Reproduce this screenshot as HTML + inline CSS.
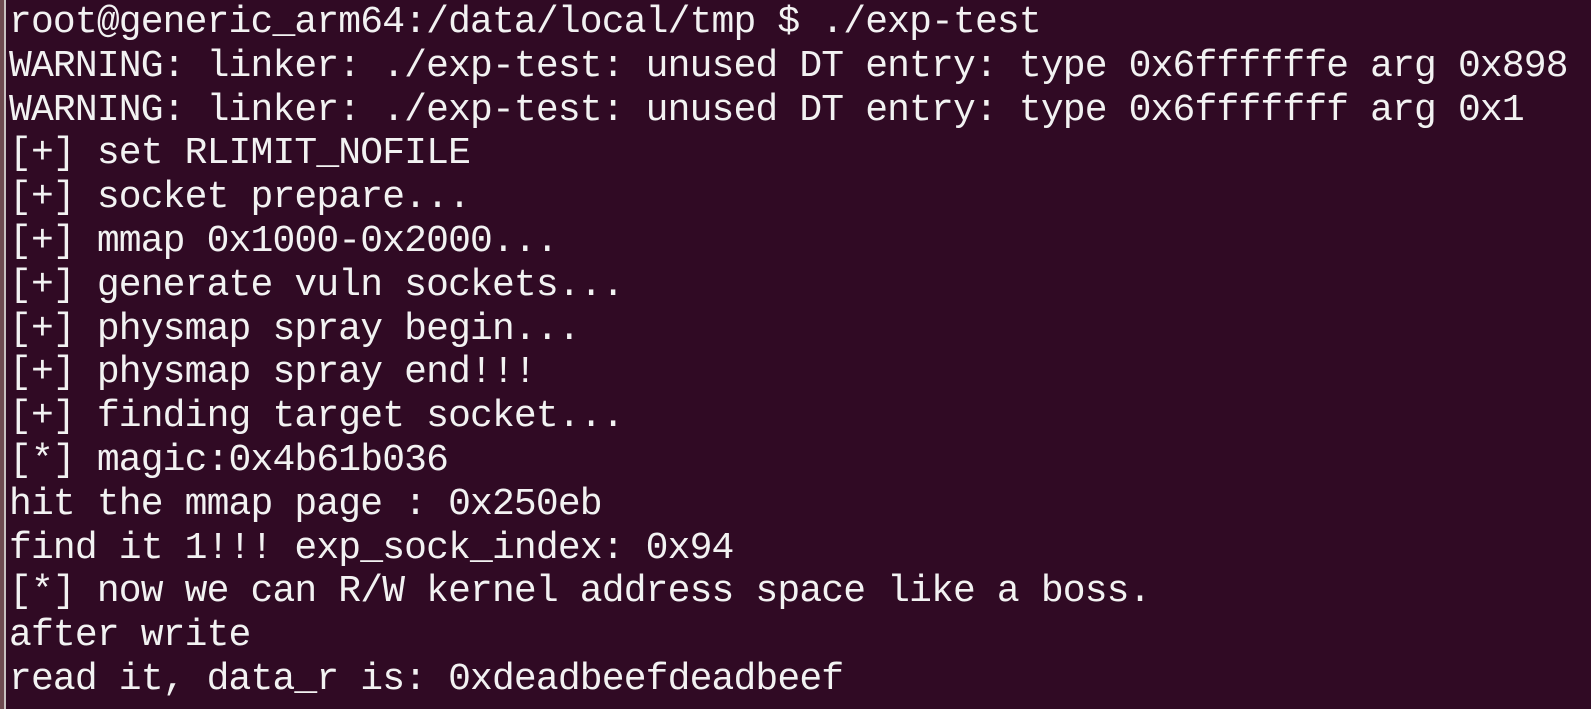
<!DOCTYPE html>
<html><head><meta charset="utf-8"><style>
html,body{margin:0;padding:0;width:1591px;height:709px;overflow:hidden;background:#300a24;}
.b{position:absolute;left:0;top:0;width:4px;height:709px;background:#6e4a50;}
.b2{position:absolute;left:4px;top:0;width:2px;height:709px;background:#c8c0c0;}
.l{position:absolute;left:9px;margin:0;white-space:pre;font-family:"Liberation Mono","DejaVu Sans Mono",monospace;font-size:38px;letter-spacing:-0.85px;line-height:43px;color:#f2f2f2;}
</style></head><body><div class="b"></div><div class="b2"></div>
<div class="l" style="top:1px">root@generic_arm64:/data/local/tmp $ ./exp-test</div>
<div class="l" style="top:44.8px">WARNING: linker: ./exp-test: unused DT entry: type 0x6ffffffe arg 0x898</div>
<div class="l" style="top:88.6px">WARNING: linker: ./exp-test: unused DT entry: type 0x6fffffff arg 0x1</div>
<div class="l" style="top:132.4px">[+] set RLIMIT_NOFILE</div>
<div class="l" style="top:176.2px">[+] socket prepare...</div>
<div class="l" style="top:220px">[+] mmap 0x1000-0x2000...</div>
<div class="l" style="top:263.8px">[+] generate vuln sockets...</div>
<div class="l" style="top:307.6px">[+] physmap spray begin...</div>
<div class="l" style="top:351.4px">[+] physmap spray end!!!</div>
<div class="l" style="top:395.2px">[+] finding target socket...</div>
<div class="l" style="top:439px">[*] magic:0x4b61b036</div>
<div class="l" style="top:482.8px">hit the mmap page : 0x250eb</div>
<div class="l" style="top:526.6px">find it 1!!! exp_sock_index: 0x94</div>
<div class="l" style="top:570.4px">[*] now we can R/W kernel address space like a boss.</div>
<div class="l" style="top:614.2px">after write</div>
<div class="l" style="top:658px">read it, data_r is: 0xdeadbeefdeadbeef</div>
</body></html>
